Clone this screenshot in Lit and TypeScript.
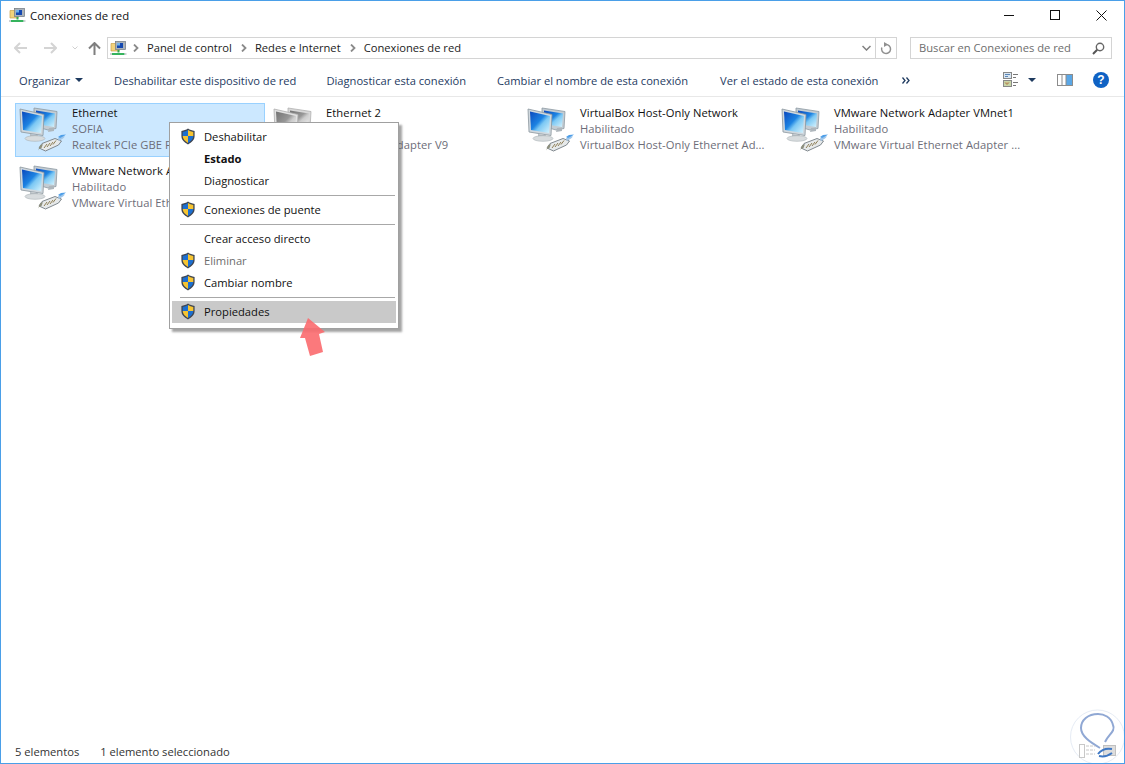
import { LitElement, html, css } from "lit";
import { customElement } from "lit/decorators.js";

const shield = () => html`<svg class="shield" width="16" height="17" viewBox="0 0 16 17">
  <path d="M8 .6C6 2 4 2.7 1.4 2.9V8c0 3.8 2.6 6.4 6.6 8.4 4-2 6.6-4.6 6.6-8.4V2.9C12 2.700 10 2 8 .6z" fill="#3f4652"/>
  <path d="M8 2C6.400 3 4.700 3.600 2.700 3.900V8H8z" fill="#1c6fd0"/>
  <path d="M8 2v6h5.300V3.900C11.300 3.600 9.600 3 8 2z" fill="#f6c431"/>
  <path d="M2.700 8c.1 3 2.300 5.200 5.300 6.900V8z" fill="#f6c431"/>
  <path d="M8 8v6.900c3-1.700 5.200-3.900 5.300-6.900z" fill="#1c6fd0"/>
</svg>`;

const netIcon = (grey = false) => html`<svg class="net ${grey ? "grey" : ""}" width="50" height="50" viewBox="0 0 50 50">
  <defs>
    <linearGradient id="scr" x1="0" y1="0" x2="1" y2="1">
      <stop offset="0" stop-color="#0a48bd"/><stop offset=".45" stop-color="#1d83e2"/><stop offset=".6" stop-color="#7cc8f4"/><stop offset="1" stop-color="#d8f4fd"/>
    </linearGradient>
  </defs>
  <path d="M16 4l23 3.500-1 17-8 1.500-14-4z" fill="#c3ccd3" stroke="#8d99a2" stroke-width=".8"/>
  <path d="M18 6.500l19 3-1 13.500-18-3z" fill="url(#scr)"/>
  <path d="M31 24l5-.500v3.500l-6 1z" fill="#aeb6bc"/>
  <path d="M2 5l24 5.500-1 21-22-3.500z" fill="#d0d8de" stroke="#8a959d" stroke-width=".8"/>
  <path d="M4 7.500l20 4.600-1 16.900-18-3z" fill="url(#scr)"/>
  <path d="M12 30l8 1.200v3l-8-.700z" fill="#b4bcc2"/>
  <ellipse cx="17" cy="34.500" rx="10" ry="2.800" fill="#d8dcde" stroke="#aab1b6" stroke-width=".6"/>
  <path d="M21 44l3-4.500 13-5 6.500 2.500-3 4-13 6z" fill="#e6e9ea" stroke="#737c82" stroke-width=".9"/>
  <path d="M21 45l-1 1.500 2-5 3-1.500-1.500 4z" fill="#8d8f7c"/>
  <path d="M26 44l3-4M29 43l3-4M32 42l3-4M35 40.500l3-4" stroke="#8e7f56" stroke-width="1"/>
  <path d="M41 37l4-2.500 2-2-4-.500-3 2.500z" fill="#9fc6ea"/>
  <path d="M42 34l4-2 2-1.500-5 .500-3 2z" fill="#4f9fe8"/>
</svg>`;

const smallNet = () => html`<svg width="17" height="17" viewBox="0 0 17 17">
  <path d="M1 3.500h4l1.500-1.500H9v9H1z" fill="#f2d27a" stroke="#c9a24b" stroke-width=".7"/>
  <rect x="5.500" y="1.500" width="10" height="8" fill="#aab2ba" stroke="#6f7880" stroke-width=".7"/>
  <rect x="7" y="3" width="6" height="5" fill="#1448b0"/>
  <path d="M7 3h3v2.500H7z" fill="#6fb2ec"/>
  <path d="M7.500 10h2v2.500h-2z" fill="#35a853"/>
  <path d="M2 13h12.500v2H2z" fill="#35b35d"/>
  <path d="M0 14h2M14.500 14h2" stroke="#9aa2a8"/>
</svg>`;

const chevron = () => html`<svg class="crumb" width="6" height="8" viewBox="0 0 6 8"><path d="M1 .5L4.500 4 1 7.500" fill="none" stroke="#8a8a8a" stroke-width="1.800"/></svg>`;
const caret = (c = "#1e3a5f") => html`<svg width="8" height="4" viewBox="0 0 8 4"><path d="M0 0h8L4 4z" fill="${c}"/></svg>`;

const tiles: [string, string, string, boolean, boolean][] = [
  ["Ethernet", "SOFIA", "Realtek PCIe GBE Family Controller", true, false],
  ["Ethernet 2", "Deshabilitado", "TAP-Win-32 Adapter V9", false, true],
  ["VirtualBox Host-Only Network", "Habilitado", "VirtualBox Host-Only Ethernet Ad...", false, false],
  ["VMware Network Adapter VMnet1", "Habilitado", "VMware Virtual Ethernet Adapter ...", false, false],
  ["VMware Network Adapter VMnet8", "Habilitado", "VMware Virtual Ethernet Adapter ...", false, false],
];

type MI = { t?: string; s?: boolean; b?: boolean; d?: boolean; h?: boolean; sep?: boolean };
const menu: MI[] = [
  { t: "Deshabilitar", s: true }, { t: "Estado", b: true }, { t: "Diagnosticar" }, { sep: true },
  { t: "Conexiones de puente", s: true }, { sep: true },
  { t: "Crear acceso directo" }, { t: "Eliminar", s: true, d: true }, { t: "Cambiar nombre", s: true }, { sep: true },
  { t: "Propiedades", s: true, h: true },
];

@customElement("app-root")
export class AppRoot extends LitElement {
  static styles = css`
    :host { display: block; width: 1125px; height: 764px; overflow: hidden; background: #fff;
      font-family: "Open Sans", "Noto Sans", sans-serif; font-size: 11.2px; color: #1a1a1a; }
    .win { height: 764px; box-sizing: border-box; border: 1px solid #4a9fe8; display: flex; flex-direction: column; position: relative; }
    .title { height: 29px; display: flex; align-items: center; padding-left: 8px; gap: 4px; flex: none; }
    .title .cap { font-size: 11.400px; color: #111; margin-top: -1px; }
    .wbtns { margin-left: auto; display: flex; margin-top: -1px; }
    .wbtn { width: 46px; height: 29px; display: flex; align-items: center; justify-content: center; }
    .nav { height: 22px; margin-top: 7px; display: flex; align-items: center; flex: none; padding-left: 13px; }
    .navbtns { display: flex; align-items: center; width: 93px; }
    .navbtns svg { flex: none; }
    .addr { width: 790px; height: 22px; box-sizing: border-box; border: 1px solid #d4d4d4; display: flex; align-items: center; padding-left: 2px; }
    .addr .crumb { margin: 0 8px 0 9px; }
    .addr .crumb.first { margin: 0 8px 0 6px; }
    .addr span { color: #1c1c1c; position: relative; top: -1px; }
    .addr .tail { margin-left: auto; display: flex; align-items: center; height: 100%; }
    .addr .tail .dd { width: 17px; display: flex; justify-content: center; }
    .addr .tail .rf { width: 20px; height: 100%; border-left: 1px solid #d4d4d4; display: flex; align-items: center; justify-content: center; }
    .search { width: 202px; height: 22px; box-sizing: border-box; border: 1px solid #d4d4d4; margin-left: 13px; display: flex; align-items: center; padding: 0 6px 0 8px; color: #6d6d6d; justify-content: space-between; }
    .search span { position: relative; top: -1px; }
    .tools { height: 32px; margin-top: 6px; flex: none; display: flex; align-items: center; border-bottom: 1px solid #e8e8e8; color: #1e3a5f; padding: 0 0 1px 18px; box-sizing: border-box; font-size: 11.150px; }
    .tools .t { white-space: nowrap; display: flex; align-items: center; gap: 5px; }
    .right { margin-left: auto; display: flex; align-items: center; padding-right: 15px; }
    .list { flex: 1; padding: 6px 0 0 14px; display: grid; grid-template-columns: repeat(4, 254px); grid-auto-rows: 58px; align-content: start; }
    .tile { box-sizing: border-box; width: 250px; height: 54px; display: flex; border: 1px solid transparent; padding-left: 2px; }
    .tile.sel { background: #cce8ff; border-color: #99d1ff; }
    .tile svg.net { flex: none; margin: 0 4px 0 0; }
    .net.grey { filter: grayscale(1) opacity(.75); }
    .lines { display: flex; flex-direction: column; line-height: 16px; white-space: nowrap; padding-top: 1px; letter-spacing: .07px; }
    .lines .a { color: #111; }
    .lines .b { color: #6d6d78; }
    .status { height: 22px; flex: none; display: flex; align-items: center; padding-left: 14px; gap: 21px; color: #333; padding-bottom: 1px; box-sizing: border-box; }
    .menu { position: absolute; left: 168px; top: 121px; width: 230px; height: 207px; box-sizing: border-box; background: #fff; border: 1px solid #a0a0a0; box-shadow: 3px 3px 2px rgba(90,90,90,.55); padding: 3px 2px 0; z-index: 3; display: flex; flex-direction: column; }
    .mi { height: 22px; display: flex; align-items: center; flex: none; position: relative; padding-left: 32px; color: #111; }
    .mi span { position: relative; top: -1px; }
    .mi .shield { position: absolute; left: 8px; top: 2px; }
    .mi.b { font-weight: 700; }
    .mi.d { color: #6d6d6d; }
    .mi.h { background: #c9c9c9; }
    .sep { height: 1px; background: #a8a8a8; margin: 3px 1px 3px 8px; flex: none; }
    .arrow { position: absolute; left: 296px; top: 317px; z-index: 4; }
    .wm { position: absolute; right: 0; bottom: 0; z-index: 1; }
    .t.m30 { margin-left: 30px; }
    .t.m31 { margin-left: 31px; }
    .t.m32 { margin-left: 32px; }
    .t.m24 { margin-left: 24px; }
  `;

  render() {
    return html`<div class="win">
      <div class="title">
        ${smallNet()}<span class="cap">Conexiones de red</span>
        <div class="wbtns">
          <div class="wbtn"><svg width="10" height="10"><path d="M0 5.500h10" stroke="#111"/></svg></div>
          <div class="wbtn"><svg width="10" height="10"><rect x=".5" y=".5" width="9" height="9" fill="none" stroke="#111"/></svg></div>
          <div class="wbtn"><svg width="11" height="11"><path d="M.5.500l10 10M10.500.500l-10 10" stroke="#111"/></svg></div>
        </div>
      </div>
      <div class="nav">
        <div class="navbtns">
          <svg width="13" height="12" viewBox="0 0 13 12"><path d="M6 1L1 6l5 5M1 6h12" fill="none" stroke="#d4d4d4" stroke-width="2"/></svg>
          <svg style="margin-left:17px" width="13" height="12" viewBox="0 0 13 12"><path d="M7 1l5 5-5 5M12 6H0" fill="none" stroke="#d4d4d4" stroke-width="2"/></svg>
          <svg style="margin-left:15px" width="6" height="4" viewBox="0 0 6 4"><path d="M.5.500L3 3 5.500.500" fill="none" stroke="#d0d0d0"/></svg>
          <svg style="margin-left:10px" width="13" height="13" viewBox="0 0 13 13"><path d="M1 6.500L6.500 1 12 6.500M6.500 1v12" fill="none" stroke="#7f7f7f" stroke-width="2"/></svg>
        </div>
        <div class="addr">
          ${smallNet()}
          <svg class="crumb first" width="6" height="8" viewBox="0 0 6 8"><path d="M1 .5L4.500 4 1 7.500" fill="none" stroke="#8a8a8a" stroke-width="1.800"/></svg>
          <span>Panel de control</span>${chevron()}<span>Redes e Internet</span>${chevron()}<span>Conexiones de red</span>
          <div class="tail">
            <div class="dd"><svg width="9" height="6" viewBox="0 0 9 6"><path d="M.5 1L4.500 5 8.500 1" fill="none" stroke="#808080" stroke-width="1.500"/></svg></div>
            <div class="rf"><svg width="12" height="13" viewBox="0 0 12 13"><path d="M6 2.500a4.500 4.500 0 1 1-4.200 3" fill="none" stroke="#909090" stroke-width="1.500"/><path d="M4 0l4 2.500L4 5z" fill="#909090"/></svg></div>
          </div>
        </div>
        <div class="search"><span>Buscar en Conexiones de red</span>
          <svg width="13" height="13" viewBox="0 0 13 13"><circle cx="8" cy="5" r="3.700" fill="none" stroke="#666" stroke-width="1.400"/><path d="M5.200 7.800L1 12" stroke="#555" stroke-width="2"/></svg>
        </div>
      </div>
      <div class="tools">
        <span class="t">Organizar ${caret()}</span>
        <span class="t m31">Deshabilitar este dispositivo de red</span>
        <span class="t m30">Diagnosticar esta conexión</span>
        <span class="t m31">Cambiar el nombre de esta conexión</span>
        <span class="t m32">Ver el estado de esta conexión</span>
        <span class="t m24"><svg width="8" height="7" viewBox="0 0 8 7"><path d="M.5.500L3 3.500.5 6.500M4.500.500L7 3.500 4.500 6.500" fill="none" stroke="#1e3a5f" stroke-width="1.300"/></svg></span>
        <div class="right">
          <svg width="15" height="16" viewBox="0 0 15 16"><rect x=".5" y=".5" width="8" height="6" fill="#d9e6f2" stroke="#888"/><rect x=".5" y="8.500" width="8" height="6" fill="#c9d6a8" stroke="#888"/><path d="M2 2.500h5M2 4.500h3" stroke="#5c87b8"/><path d="M2 10.500l2 2 2-2" fill="#c96" stroke="#a85"/><path d="M10 2.500h5M10 5.500h3M10 10.500h5M10 13.500h3" stroke="#777"/></svg>
          <span style="margin-left:10px;display:flex">${caret()}</span>
          <svg style="margin-left:21px" width="16" height="12" viewBox="0 0 16 12"><rect x=".5" y=".5" width="15" height="11" fill="#fff" stroke="#8c8c8c"/><rect x="9" y="1" width="6" height="10" fill="#5aa7e6"/><path d="M5 1v10M9 1v10" stroke="#8c8c8c"/></svg>
          <svg style="margin-left:20px" width="16" height="16" viewBox="0 0 16 16"><circle cx="8" cy="8" r="8" fill="#0f62c4"/><text x="8" y="12.300" text-anchor="middle" font-size="12" font-weight="700" font-family="Liberation Sans" fill="#fff">?</text></svg>
        </div>
      </div>
      <div class="list">
        ${tiles.map(([a, b, c, sel, grey]) => html`<div class="tile ${sel ? "sel" : ""}">
          ${netIcon(grey)}
          <div class="lines"><span class="a">${a}</span><span class="b">${b}</span><span class="b">${c}</span></div>
        </div>`)}
      </div>
      <div class="status"><span>5 elementos</span><span>1 elemento seleccionado</span></div>
      <div class="menu">
        ${menu.map((m) => m.sep ? html`<div class="sep"></div>` : html`<div class="mi ${m.b ? "b" : ""} ${m.d ? "d" : ""} ${m.h ? "h" : ""}">${m.s ? shield() : ""}<span>${m.t}</span></div>`)}
      </div>
      <svg class="arrow" width="30" height="40" viewBox="0 0 30 40"><path d="M11 0L28 14 22 16 26 34 13 38 8 20 3 20z" fill="#fb6a6e" opacity=".9"/></svg>
      <svg class="wm" width="56" height="56" viewBox="0 0 56 56">
        <circle cx="29.500" cy="30" r="27" fill="#fff" stroke="#e6ecf5" stroke-width="1"/>
        <path d="M37 35C40 28 48 24 45 18 43 10 36 7 30 7 20 7 13 13 13 21 13 29 22 35 32 41" fill="none" stroke="#90a8d4" stroke-width="2"/>
        <rect x="11.500" y="37.500" width="5" height="13" fill="#fff" stroke="#c8c8c8"/>
        <path d="M18 39h9M18 43h9M18 47h9" stroke="#c8c8c8" stroke-dasharray="3 1"/>
        <rect x="35.500" y="38.500" width="12" height="10" fill="#ddd" stroke="#c0c0c0"/>
        <path d="M30 47c3-4 8-6 14-5M31 49c4 1 9 0 13-3" fill="none" stroke="#3f78c4" stroke-width="2"/>
      </svg>
    </div>`;
  }
}
